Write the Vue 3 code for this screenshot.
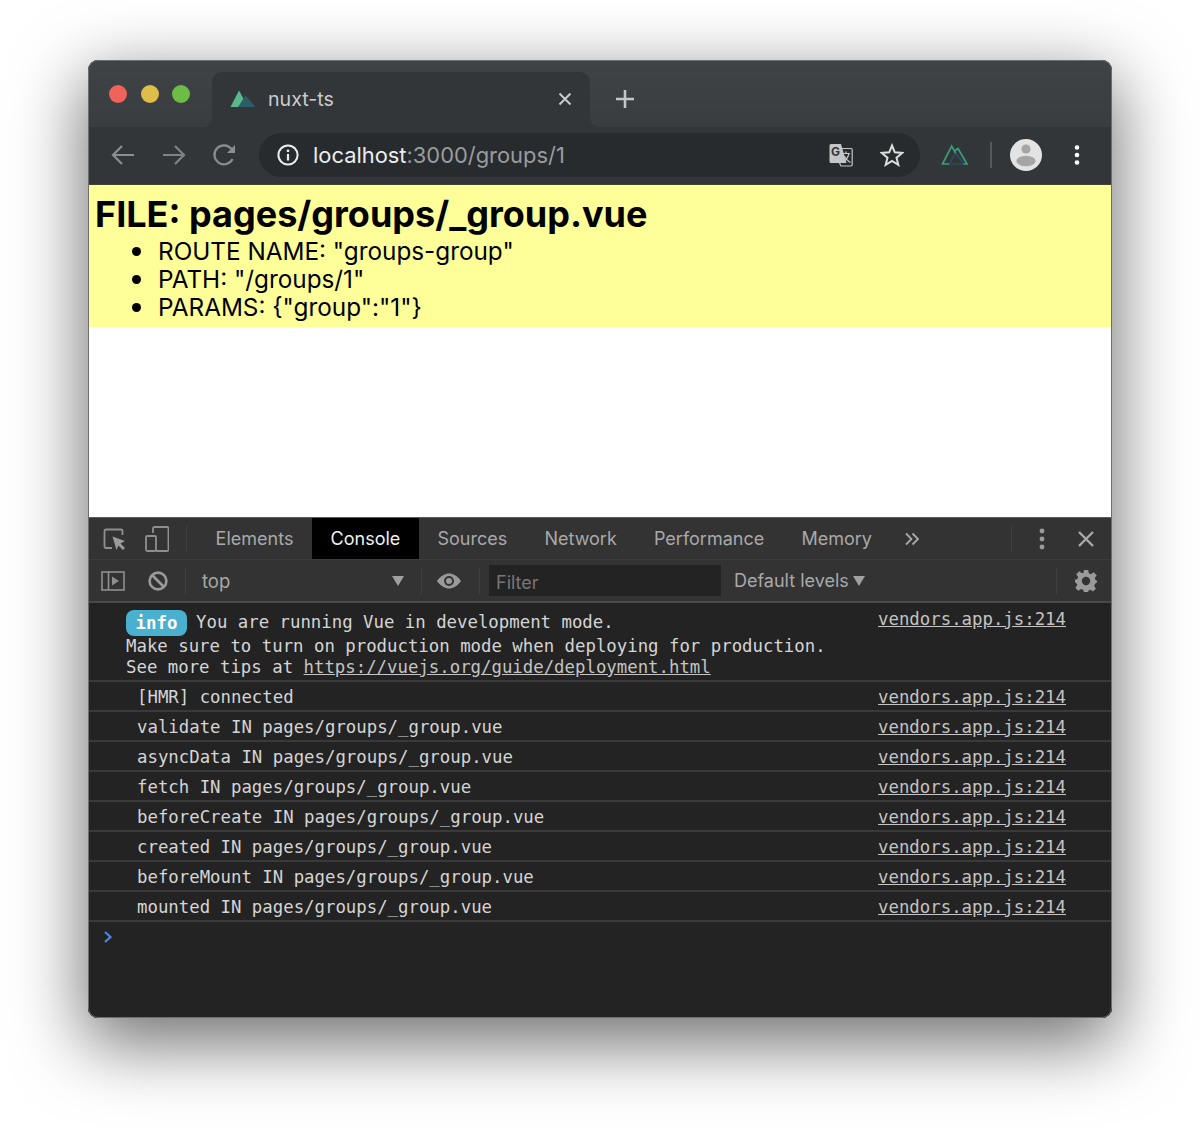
<script setup>
const tabs = ['Elements', 'Console', 'Sources', 'Network', 'Performance', 'Memory']
const rows = [
  '[HMR] connected',
  'validate IN pages/groups/_group.vue',
  'asyncData IN pages/groups/_group.vue',
  'fetch IN pages/groups/_group.vue',
  'beforeCreate IN pages/groups/_group.vue',
  'created IN pages/groups/_group.vue',
  'beforeMount IN pages/groups/_group.vue',
  'mounted IN pages/groups/_group.vue',
]
const source = 'vendors.app.js:214'
</script>

<template>
  <div class="page">
    <div class="window">
      <div class="strip">
        <div class="lights">
          <span class="light red"></span>
          <span class="light yellow"></span>
          <span class="light green"></span>
        </div>
        <div class="tab">
          <svg class="favicon" width="26" height="20" viewBox="0 0 26 20">
            <path d="M0.5 18 L9 1.5 L18 18 Z" fill="#5ab98c" />
            <path d="M8 18 L15.5 6.5 L25.5 18 Z" fill="#2e5d6a" />
          </svg>
          <span class="tab-title">nuxt-ts</span>
          <svg class="tab-close" width="16" height="16" viewBox="0 0 16 16">
            <path d="M2.5 2.5 L13.5 13.5 M13.5 2.5 L2.5 13.5" stroke="#c8cacc" stroke-width="2" />
          </svg>
        </div>
        <svg class="plus" width="20" height="20" viewBox="0 0 20 20">
          <path d="M10 1 V19 M1 10 H19" stroke="#c4c7c9" stroke-width="2.6" />
        </svg>
      </div>

      <div class="toolbar">
        <svg class="nav" width="26" height="24" viewBox="0 0 26 24">
          <path d="M24 12 H3 M12 3 L3 12 L12 21" fill="none" stroke="#8b8e90" stroke-width="2.2" />
        </svg>
        <svg class="nav" width="26" height="24" viewBox="0 0 26 24">
          <path d="M2 12 H23 M14 3 L23 12 L14 21" fill="none" stroke="#808386" stroke-width="2.2" />
        </svg>
        <svg class="nav" width="26" height="24" viewBox="0 0 26 24">
          <path d="M20.5 16 A9.5 9.5 0 1 1 19.5 6" fill="none" stroke="#8b8e90" stroke-width="2.2" />
          <path d="M23 2 V10 H15 Z" fill="#8b8e90" />
        </svg>
        <div class="omnibox">
          <svg class="info-icon" width="22" height="22" viewBox="0 0 22 22">
            <circle cx="11" cy="11" r="9.6" fill="none" stroke="#eceded" stroke-width="2" />
            <path d="M11 10 V16.5" stroke="#eceded" stroke-width="2.2" />
            <circle cx="11" cy="6.8" r="1.4" fill="#eceded" />
          </svg>
          <span class="url"><span class="host">localhost</span><span class="rest">:3000/groups/1</span></span>
          <svg class="translate" width="24" height="24" viewBox="0 0 24 24">
            <path d="M2 1 H12 L17.5 20 H2 A1.5 1.5 0 0 1 0.5 18.5 V2.5 A1.5 1.5 0 0 1 2 1 Z" fill="#c4c6c7" />
            <path d="M10 5.5 H22 A1.2 1.2 0 0 1 23.2 6.7 V21.8 A1.2 1.2 0 0 1 22 23 H12 L10.5 20" fill="none" stroke="#c4c6c7" stroke-width="1.2" />
            <text x="2" y="13" class="g-letter">G</text>
            <path d="M13.5 10.5 H21 M17 8.5 V10.5 M20 10.5 C19 14.5 16.5 17.5 14 19 M15.5 13 C16.5 16 19 18 21.5 19.5" fill="none" stroke="#c4c6c7" stroke-width="1.2" />
          </svg>
          <svg class="star" width="24" height="24" viewBox="0 0 24 24">
            <path d="M12 2.5 L14.8 9.3 L22.2 9.9 L16.5 14.7 L18.3 21.8 L12 18 L5.7 21.8 L7.5 14.7 L1.8 9.9 L9.2 9.3 Z" fill="none" stroke="#dcdddd" stroke-width="2" />
          </svg>
        </div>
        <svg class="ext" width="28" height="22" viewBox="0 0 28 22">
          <path d="M8 20 L14.7 9.3 L23 20 Z" fill="none" stroke="#2b4a5e" stroke-width="1.7" />
          <path d="M8 20 H1.5 L10.7 2 L14.7 9.3 M13.5 7 L17 4.5 L26 20 H22.5" fill="none" stroke="#3a9c7a" stroke-width="1.7" />
        </svg>
        <span class="tb-sep"></span>
        <svg class="avatar" width="32" height="32" viewBox="0 0 32 32">
          <circle cx="16" cy="16" r="16" fill="#e3e3e3" />
          <circle cx="16" cy="10" r="4.6" fill="#a5a5a5" />
          <ellipse cx="16" cy="22" rx="9.6" ry="5.2" fill="#a5a5a5" />
        </svg>
        <svg class="kebab" width="6" height="20" viewBox="0 0 6 20">
          <circle cx="3" cy="2.5" r="2.3" fill="#fff" />
          <circle cx="3" cy="10" r="2.3" fill="#fff" />
          <circle cx="3" cy="17.5" r="2.3" fill="#fff" />
        </svg>
      </div>

      <div class="viewport">
        <div class="route">
          <h1>FILE: pages/groups/_group.vue</h1>
          <ul>
            <li>ROUTE NAME: "groups-group"</li>
            <li>PATH: "/groups/1"</li>
            <li>PARAMS: {"group":"1"}</li>
          </ul>
        </div>
      </div>

      <div class="devtools">
        <div class="dt-tabs">
          <svg class="dt-ic1" width="24" height="24" viewBox="0 0 24 24">
            <path d="M9 21 H3 A1.5 1.5 0 0 1 1.5 19.5 V4 A1.5 1.5 0 0 1 3 2.5 H18 A1.5 1.5 0 0 1 19.5 4 V8" fill="none" stroke="#8f8f8f" stroke-width="1.8" />
            <path d="M9.5 9.5 L22 14 L17.5 16.5 L22 21 L20 23 L15.5 18.5 L13.5 23 Z" fill="#9a9a9a" />
          </svg>
          <svg class="dt-ic2" width="24" height="26" viewBox="0 0 24 26">
            <path d="M8 7 V2.5 A1.5 1.5 0 0 1 9.5 1 H22 A1.5 1.5 0 0 1 23.5 2.5 V23.5 A1.5 1.5 0 0 1 22 25 H11" fill="none" stroke="#8f8f8f" stroke-width="1.8" />
            <rect x="1" y="10" width="10" height="15" rx="1.4" fill="none" stroke="#8f8f8f" stroke-width="1.8" />
          </svg>
          <span class="dt-sep first"></span>
          <div v-for="t in tabs" :key="t" class="dt-tab" :class="{ active: t === 'Console' }">{{ t }}</div>
          <svg class="more" width="16" height="14" viewBox="0 0 16 14">
            <path d="M2 1.5 L7.5 7 L2 12.5 M8.5 1.5 L14 7 L8.5 12.5" fill="none" stroke="#a9a9a9" stroke-width="1.8" />
          </svg>
          <span class="spacer"></span>
          <span class="dt-sep"></span>
          <svg class="dt-kebab" width="6" height="22" viewBox="0 0 6 22">
            <circle cx="3" cy="3" r="2.4" fill="#9a9a9a" />
            <circle cx="3" cy="11" r="2.4" fill="#9a9a9a" />
            <circle cx="3" cy="19" r="2.4" fill="#9a9a9a" />
          </svg>
          <svg class="dt-close" width="18" height="18" viewBox="0 0 18 18">
            <path d="M2 2 L16 16 M16 2 L2 16" stroke="#a9a9a9" stroke-width="2.4" />
          </svg>
        </div>

        <div class="dt-bar">
          <svg class="sidebar-ic" width="24" height="20" viewBox="0 0 24 20">
            <rect x="1" y="1" width="22" height="18" fill="none" stroke="#8f8f8f" stroke-width="1.6" />
            <path d="M7.5 1 V19" stroke="#8f8f8f" stroke-width="1.6" />
            <path d="M11 5.5 L18 10 L11 14.5 Z" fill="#8f8f8f" />
          </svg>
          <svg class="block-ic" width="20" height="20" viewBox="0 0 20 20">
            <circle cx="10" cy="10" r="8.4" fill="none" stroke="#9a9a9a" stroke-width="2.6" />
            <path d="M4 4 L16 16" stroke="#9a9a9a" stroke-width="2.6" />
          </svg>
          <span class="dt-sep"></span>
          <span class="context">top</span>
          <span class="caret ctx"></span>
          <span class="dt-sep"></span>
          <svg class="eye" width="26" height="16" viewBox="0 0 26 16">
            <path d="M1 8 C5 2.5 9 0.5 13 0.5 C17 0.5 21 2.5 25 8 C21 13.5 17 15.5 13 15.5 C9 15.5 5 13.5 1 8 Z" fill="#9a9a9a" />
            <circle cx="13" cy="8" r="5" fill="#333" />
            <circle cx="13" cy="8" r="3" fill="#9a9a9a" />
          </svg>
          <span class="dt-sep"></span>
          <div class="filter">Filter</div>
          <span class="levels">Default levels</span>
          <span class="caret lvl"></span>
          <span class="spacer"></span>
          <span class="dt-sep"></span>
          <svg class="gear" width="24" height="24" viewBox="0 0 24 24">
            <path fill="#9a9a9a" fill-rule="evenodd" d="M9.8 1 H14.2 L14.8 4.3 L16.9 5.2 L19.7 3.3 L22.7 6.3 L20.8 9.1 L21.7 11.2 L23 11.8 V13.2 L20.9 14.9 L20.2 16.9 L21.9 19.7 L19 22.6 L16.4 20.8 L14.5 21.6 L14.2 23 H9.8 L9.2 20.7 L7.1 19.9 L4.3 21.8 L1.4 18.9 L3.2 16.1 L2.4 14.2 L1 13.2 V10.8 L3.3 10 L4.1 8 L2.2 5.3 L5.2 2.3 L8 4.2 L9.8 3.4 Z M12 7.8 A4.2 4.2 0 1 0 12 16.2 A4.2 4.2 0 1 0 12 7.8 Z" />
          </svg>
        </div>

        <div class="console">
          <div class="msg info-msg">
            <div class="msg-text">
              <div class="line1"><span class="badge">info</span>You are running Vue in development mode.</div>
              <div>Make sure to turn on production mode when deploying for production.</div>
              <div>See more tips at <a class="link">https://vuejs.org/guide/deployment.html</a></div>
            </div>
            <a class="src src-top">{{ source }}</a>
          </div>
          <div v-for="r in rows" :key="r" class="msg row">
            <span class="row-text">{{ r }}</span>
            <a class="src">{{ source }}</a>
          </div>
          <svg class="prompt" width="10" height="14" viewBox="0 0 10 14">
            <path d="M2 2 L7.5 7 L2 12" fill="none" stroke="#4a86e8" stroke-width="2.2" />
          </svg>
        </div>
      </div>
    </div>
  </div>
</template>

<style>
html, body { margin: 0; background: #fff; }
</style>

<style scoped>
.page {
  width: 1200px;
  height: 1134px;
  box-sizing: border-box;
  padding: 60px 88px 0;
  background: #fff;
  overflow: hidden;
  font-family: Inter, "Liberation Sans", sans-serif;
}
.window {
  width: 1024px;
  height: 958px;
  display: flex;
  flex-direction: column;
  border-radius: 10px;
  overflow: hidden;
  box-shadow: 0 22px 70px 4px rgba(0, 0, 0, .56);
  background: #232323;
  position: relative;
}
.window::after {
  content: "";
  position: absolute;
  inset: 0;
  border: 1px solid #6e6e6e;
  border-radius: 10px;
  pointer-events: none;
}
svg { display: block; flex: none; }
.spacer { flex: 1; }

.strip {
  height: 67px;
  flex: none;
  box-sizing: border-box;
  padding-top: 12px;
  display: flex;
  background: linear-gradient(#404346, #3a3d40);
}
.lights { display: flex; gap: 13.5px; padding: 13px 0 0 21px; width: 103px; box-sizing: border-box; }
.light { width: 18px; height: 18px; border-radius: 50%; }
.red { background: #f0635a; }
.yellow { background: #e0bc4b; }
.green { background: #6cbd45; }
.tab {
  width: 378px;
  margin-left: 21px;
  height: 55px;
  border-radius: 10px 10px 0 0;
  background: #323639;
  display: flex;
  align-items: center;
  box-sizing: border-box;
  padding: 0 17px 2px 18px;
  position: relative;
}
.tab::before, .tab::after {
  content: "";
  position: absolute;
  bottom: 0;
  width: 10px;
  height: 10px;
}
.tab::before { left: -10px; background: radial-gradient(circle at 0 0, transparent 10px, #323639 10.5px); }
.tab::after { right: -10px; background: radial-gradient(circle at 100% 0, transparent 10px, #323639 10.5px); }
.tab-title { color: #c9cbcd; font-size: 19.6px; margin-left: 12px; flex: 1; }
.plus { margin: 17px 0 0 25px; }

.toolbar {
  height: 57px;
  flex: none;
  background: #323639;
  display: flex;
  align-items: center;
  padding-bottom: 1px;
  box-sizing: border-box;
}
.nav { margin-left: 22px; margin-right: 3px; }
.nav + .nav { margin-left: 22px; }
.omnibox {
  width: 661px;
  height: 44px;
  margin-left: 18px;
  border-radius: 22px;
  background: #282b2e;
  display: flex;
  align-items: center;
  box-sizing: border-box;
  padding-left: 18px;
}
.url { font-size: 21.9px; margin-left: 14px; flex: 1; }
.host { color: #eceded; }
.rest { color: #9a9c9e; }
.translate { margin-right: 27px; }
.g-letter { font-family: Inter, "Liberation Sans", sans-serif; font-size: 12px; font-weight: 700; fill: #33373a; }
.star { margin-right: 16px; }
.ext { margin-left: 21px; }
.tb-sep { width: 2px; height: 26px; background: #55585a; margin-left: 21px; }
.avatar { margin-left: 18px; }
.kebab { margin-left: 32px; }

.viewport { height: 333px; flex: none; background: #fff; border-top: 1px solid #45432a; box-sizing: border-box; }
.route {
  background: #ffff99;
  height: 142px;
  box-sizing: border-box;
  padding: 7px 7px 0;
  color: #000;
}
h1 { margin: 0; font-size: 36px; line-height: 45px; font-weight: 700; }
ul { margin: 0; padding: 0 0 0 36.5px; font-size: 24.3px; line-height: 28px; list-style: none; }
li { display: flex; align-items: center; gap: 17.5px; }
li::before {
  content: "";
  width: 9px;
  height: 9px;
  border-radius: 50%;
  background: #000;
  flex: none;
}

.devtools { flex: 1; display: flex; flex-direction: column; min-height: 0; }
.dt-tabs {
  height: 43px;
  flex: none;
  background: #333;
  border-top: 1px solid #5c5c5c;
  border-bottom: 1px solid #3d3d3d;
  display: flex;
  align-items: center;
  box-sizing: border-box;
}
.dt-ic1 { margin-left: 15px; }
.dt-ic2 { margin-left: 18px; }
.dt-sep { width: 1px; height: 26px; background: #3f3f3f; flex: none; }
.dt-sep.first { margin-left: 17px; margin-right: 10px; }
.dt-tab {
  font-size: 18px;
  color: #a9a9a9;
  padding: 0 18.6px;
  height: 41px;
  line-height: 41px;
}
.dt-tab.active { background: #000; color: #f0f0f0; }
.more { margin-left: 14px; }
.dt-kebab { margin-left: 27px; }
.dt-close { margin: 0 17px 0 32px; }

.dt-bar {
  height: 43px;
  flex: none;
  background: #333;
  border-bottom: 2px solid #4a4a4a;
  display: flex;
  align-items: center;
  box-sizing: border-box;
  color: #a9a9a9;
  font-size: 18px;
}
.sidebar-ic { margin-left: 13px; }
.block-ic { margin-left: 23px; }
.dt-bar .dt-sep { margin-left: 17px; }
.context { margin-left: 16px; width: 190px; font-size: 18.5px; }
.caret {
  width: 0; height: 0;
  border-left: 6px solid transparent;
  border-right: 6px solid transparent;
  border-top: 10px solid #a0a0a0;
  flex: none;
}
.eye { margin-left: 14px; }
.filter {
  width: 232px;
  height: 31px;
  margin-left: 9px;
  background: #232323;
  box-sizing: border-box;
  padding: 2px 0 0 7px;
  line-height: 31px;
  color: #777;
}
.levels { margin-left: 13px; }
.caret.lvl { margin-left: 4px; }
.gear { margin: 0 14px 0 17px; }

.console {
  flex: 1;
  background: #232323;
  font-family: "DejaVu Sans Mono", monospace;
  font-size: 17.35px;
  color: #d5d5d5;
  min-height: 0;
}
.msg {
  display: flex;
  justify-content: space-between;
  box-sizing: border-box;
  padding-right: 46px;
  border-bottom: 2px solid #3a3a3a;
}
.info-msg { height: 79px; padding-left: 38px; padding-top: 7px; }
.msg-text { line-height: 21px; white-space: pre; }
.line1 { display: flex; align-items: center; height: 25px; margin-bottom: 1px; }
.badge {
  background: #4ab0cf;
  color: #fff;
  font-weight: 700;
  border-radius: 8px;
  width: 61px;
  height: 26px;
  line-height: 26px;
  text-align: center;
  margin-right: 9px;
  flex: none;
}
.link, .src { color: #c4c4c4; text-decoration: underline; }
.src-top { margin-top: -2px; line-height: 22px; height: 22px; }
.row { height: 30px; padding-left: 49px; padding-top: 2px; align-items: center; }
.prompt { margin: 8px 0 0 15px; }
</style>
